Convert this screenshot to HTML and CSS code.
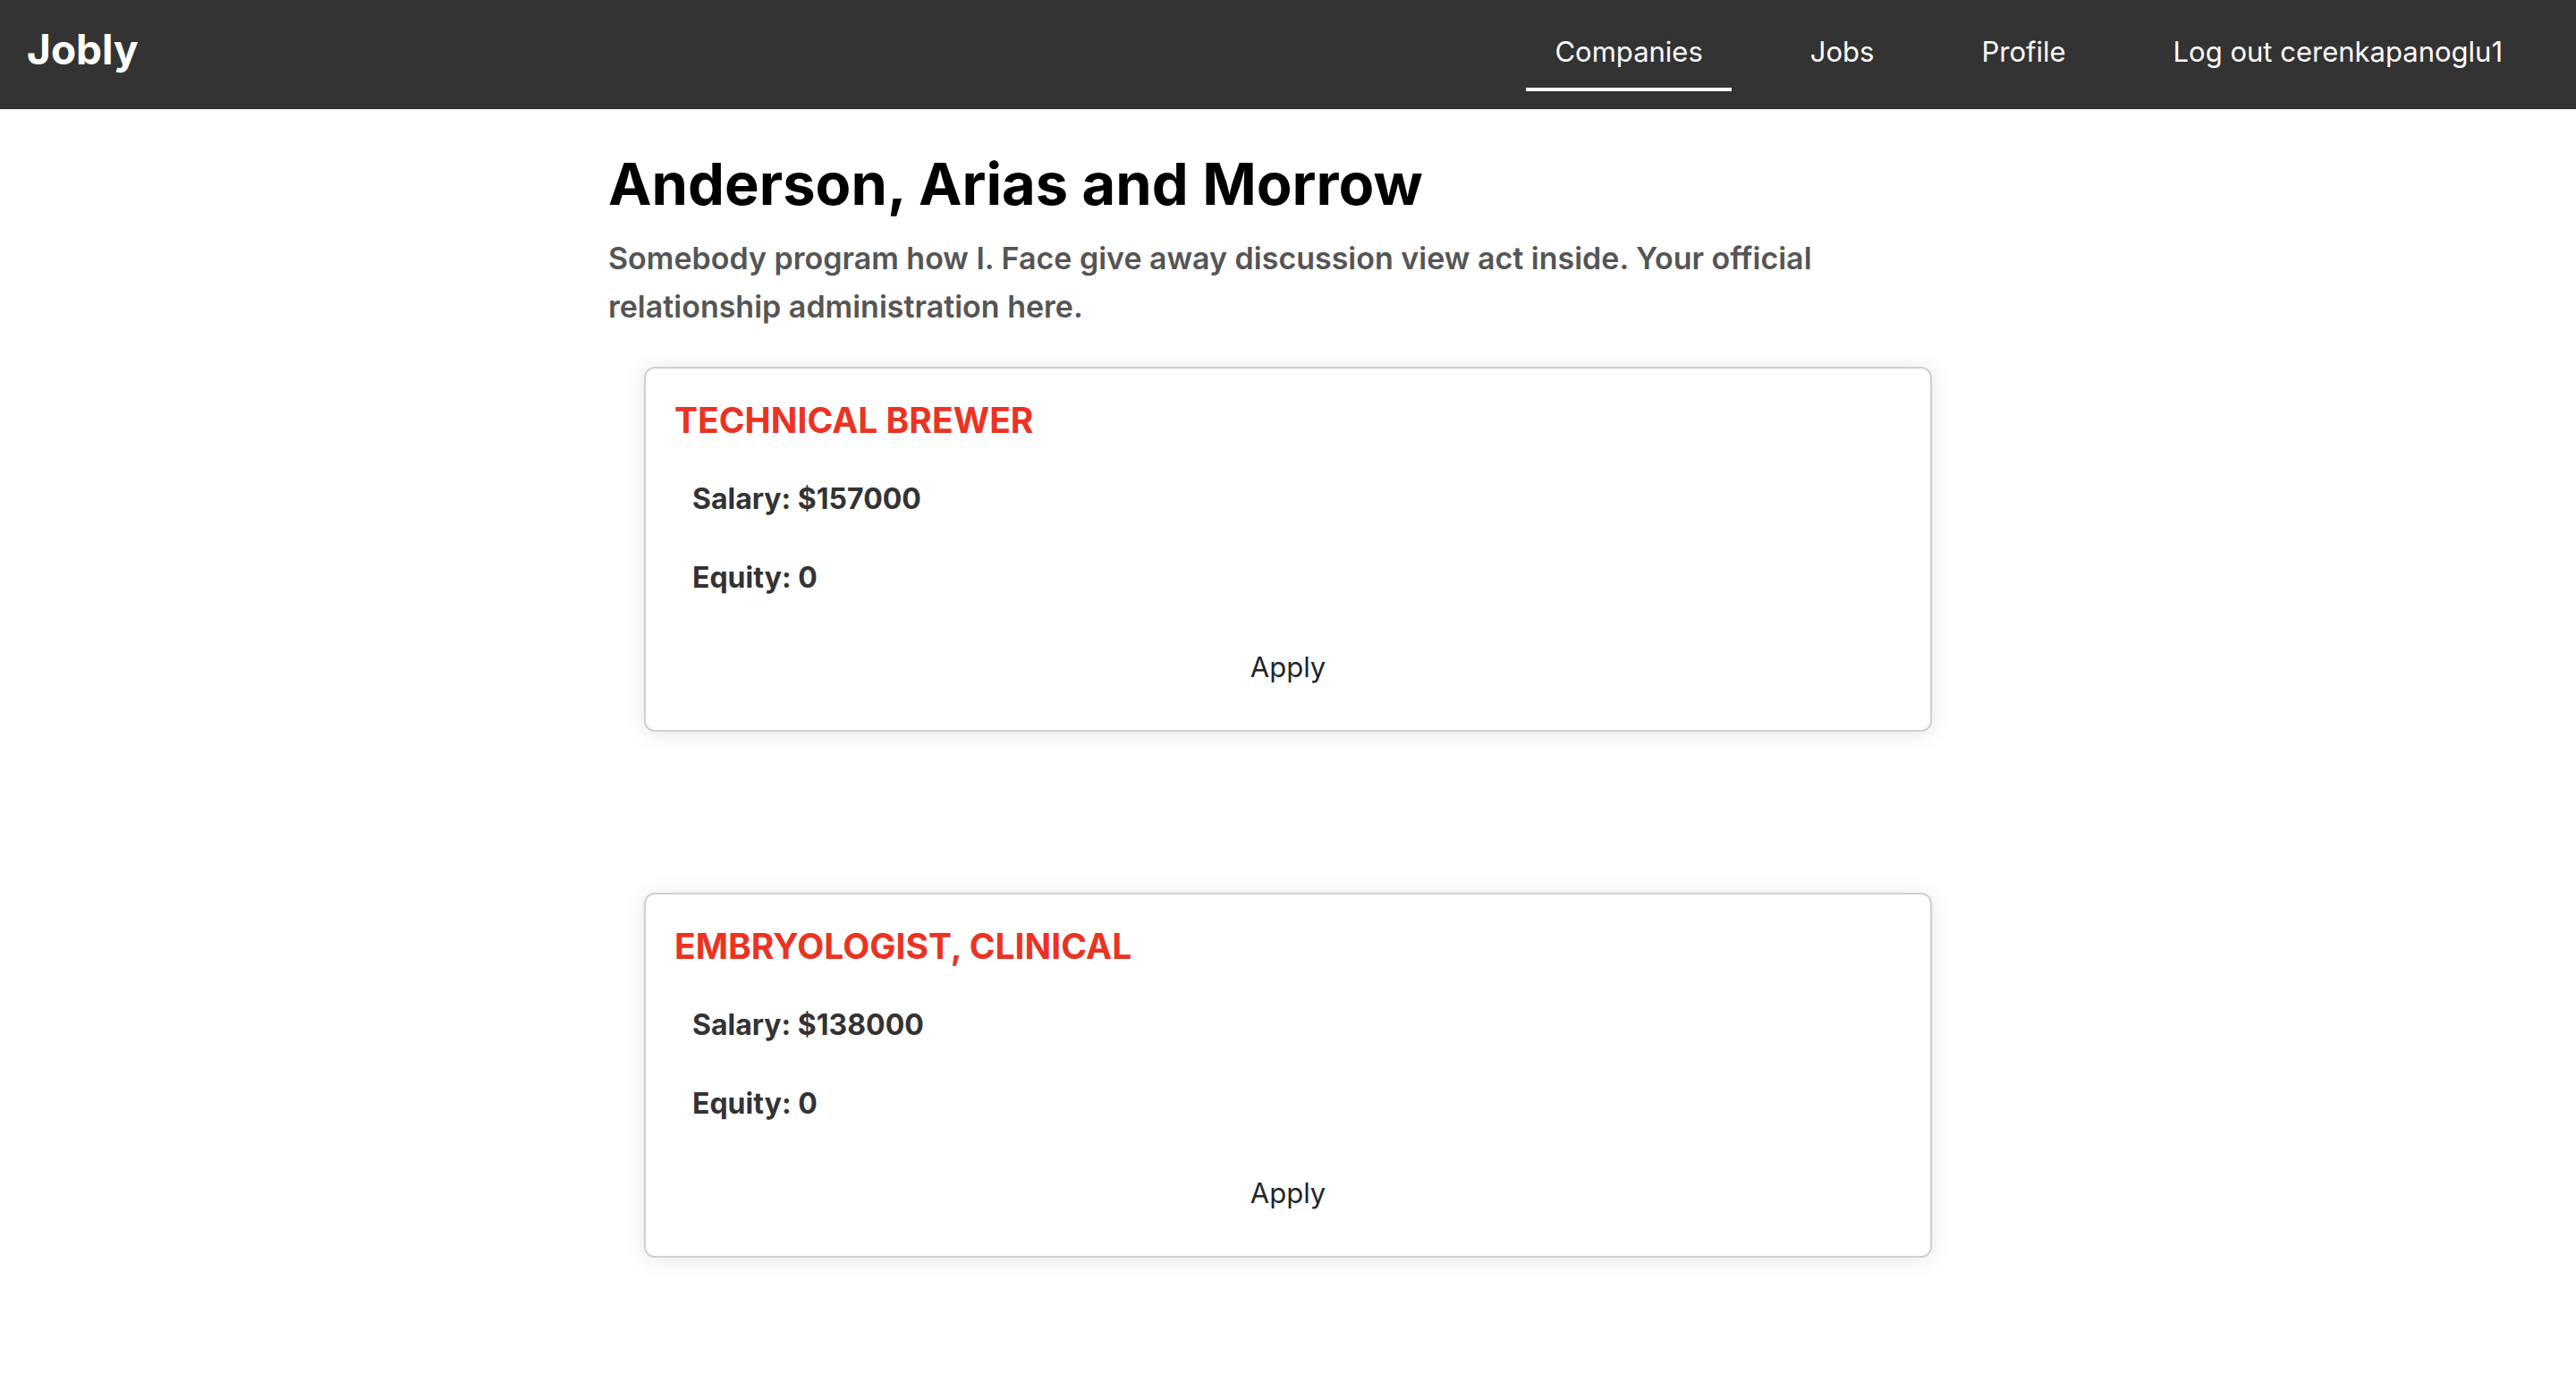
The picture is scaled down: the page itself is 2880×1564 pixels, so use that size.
FILE: index.html
```html
<!DOCTYPE html>
<html lang="en">
<head>
<meta charset="utf-8">
<title>Jobly</title>
<link rel="stylesheet" href="styles.css">
</head>
<body>
<header class="navbar">
  <a class="brand" href="#">Jobly</a>
  <nav class="nav">
    <a class="nav-link active" href="#">Companies</a>
    <a class="nav-link" href="#">Jobs</a>
    <a class="nav-link" href="#">Profile</a>
    <a class="nav-link" href="#">Log out cerenkapanoglu1</a>
  </nav>
</header>
<main class="company">
  <h1 class="company-name">Anderson, Arias and Morrow</h1>
  <p class="company-description">Somebody program how I. Face give away discussion view act inside. Your official relationship administration here.</p>
  <div class="jobs">
    <article class="card">
      <h2 class="card-title">TECHNICAL BREWER</h2>
      <p class="card-detail">Salary: $157000</p>
      <p class="card-detail">Equity: 0</p>
      <button class="apply" type="button">Apply</button>
    </article>
    <article class="card">
      <h2 class="card-title">EMBRYOLOGIST, CLINICAL</h2>
      <p class="card-detail">Salary: $138000</p>
      <p class="card-detail">Equity: 0</p>
      <button class="apply" type="button">Apply</button>
    </article>
  </div>
</main>
</body>
</html>
```
FILE: styles.css
```css
* {
  box-sizing: border-box;
}

body {
  margin: 0;
  background: #fff;
  color: #000;
  font-family: Inter, "Liberation Sans", sans-serif;
  font-size: 31px;
  line-height: 48px;
}

h1, h2, p {
  margin: 0;
}

.navbar {
  display: flex;
  justify-content: space-between;
  align-items: center;
  min-height: 122px;
  padding: 0 50px 0 30px;
  background: #333;
}

.brand {
  padding-bottom: 12px;
  color: #fff;
  font-size: 46px;
  font-weight: 700;
  text-decoration: none;
}

.nav {
  display: flex;
  gap: 56px;
}

.nav-link {
  padding: 14px 32px 16px;
  border-bottom: 4px solid transparent;
  color: #fff;
  text-decoration: none;
}

.nav-link.active {
  border-bottom-color: #fff;
}

.company {
  width: calc(50% + 80px);
  margin: 0 auto;
  padding-top: 40px;
}

.company-name {
  font-size: 65px;
  line-height: 88px;
}

.company-description {
  margin-top: 12px;
  color: #555;
  font-size: 34px;
  font-weight: 600;
  line-height: 54px;
}

.jobs {
  display: flex;
  flex-direction: column;
  gap: 180px;
  padding: 40px;
}

.card {
  padding: 34px 32px 26px;
  border: 2px solid #d0d0d0;
  border-radius: 12px;
  box-shadow: 0 2px 24px rgba(0, 0, 0, 0.1);
}

.card-title {
  color: #eb3323;
  font-size: 39px;
  font-weight: 700;
}

.card-detail {
  margin: 40px 20px 0;
  color: #333;
  font-size: 32px;
  font-weight: 700;
}

.apply {
  display: block;
  margin: 32px auto 0;
  padding: 20px;
  border: 0;
  background: none;
  color: #212529;
  font: inherit;
}
```
